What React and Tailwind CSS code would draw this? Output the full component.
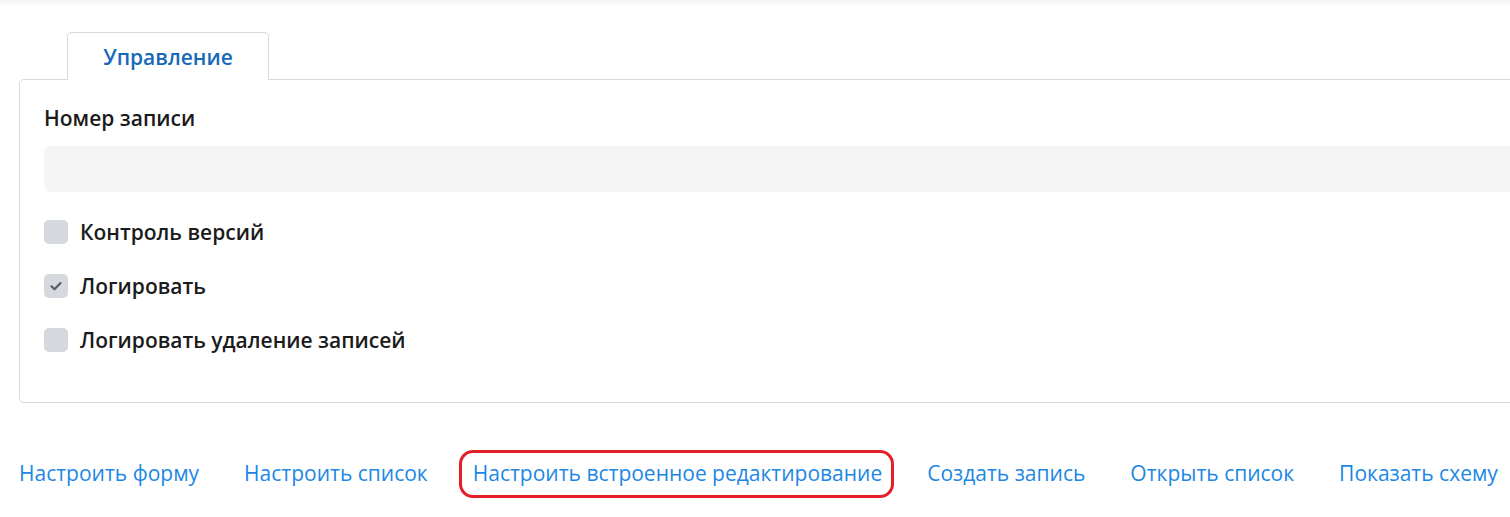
const links = [
  'Настроить форму',
  'Настроить список',
  'Настроить встроенное редактирование',
  'Создать запись',
  'Открыть список',
  'Показать схему',
]

const options = [
  { label: 'Контроль версий', checked: false },
  { label: 'Логировать', checked: true },
  { label: 'Логировать удаление записей', checked: false },
]

function Checkbox({ checked }) {
  return (
    <span className="w-6 h-6 rounded-[5px] bg-[#d5d8dd] flex items-center justify-center shrink-0">
      {checked && (
        <svg width="16" height="16" viewBox="0 0 16 16" fill="none">
          <path d="M3.5 8.3l3 3 6-6.2" stroke="#575d67" strokeWidth="2.2" strokeLinecap="round" strokeLinejoin="round" />
        </svg>
      )}
    </span>
  )
}

export default function App() {
  return (
    <div className="w-full h-[517px] overflow-hidden bg-white text-[#1b1b1b] font-['Open_Sans','Noto_Sans',sans-serif]">

      {/* ── Top shadow ───────────────────────────────────────── */}
      <div className="h-[6px] bg-gradient-to-b from-[#f2f2f2] to-white" />

      {/* ── Tabs + panel ─────────────────────────────────────── */}
      <div className="pl-[19px] pt-[26px]">
        <div className="flex pl-[48px]">
          <div className="relative z-10 -mb-px w-[202px] h-[48px] bg-white border border-b-0 border-[#d9d9d9] rounded-t-[5px] flex items-center justify-center">
            <span className="text-[21px] leading-7 font-semibold text-[#1769b8]">Управление</span>
          </div>
        </div>

        <div className="w-[1520px] border border-[#d9d9d9] rounded-[5px] pl-6 pt-6 pb-[48px]">
          <p className="text-[21px] leading-7 font-semibold">Номер записи</p>
          <div className="mt-[14px] h-[46px] rounded-md bg-[#f5f5f5]" />

          <div className="mt-[26px] flex flex-col gap-[26px]">
            {options.map(({ label, checked }) => (
              <label key={label} className="flex items-center gap-3 h-7">
                <Checkbox checked={checked} />
                <span className="text-[21px] leading-7 font-semibold">{label}</span>
              </label>
            ))}
          </div>
        </div>
      </div>

      {/* ── Action links ─────────────────────────────────────── */}
      <div className="mt-[56px] pl-[19px] flex gap-[45px] whitespace-nowrap">
        {links.map((text, i) => (
          <a key={text} className="relative text-[21px] leading-7 text-[#1d87e4]">
            {text}
            {i === 2 && (
              <span className="absolute left-[-14px] right-[-12px] top-[-9px] bottom-[-11px] border-[3px] border-[#e3202a] rounded-[14px] pointer-events-none" />
            )}
          </a>
        ))}
      </div>

    </div>
  )
}
